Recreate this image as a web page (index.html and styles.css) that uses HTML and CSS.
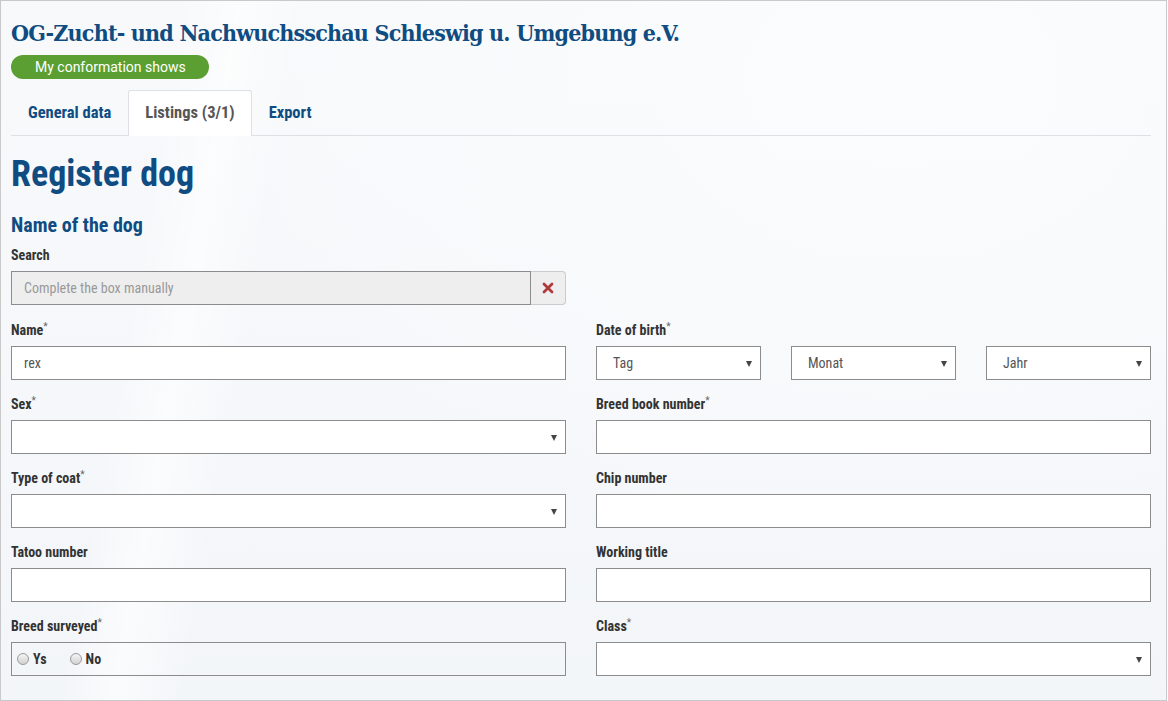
FILE: index.html
```html
<!DOCTYPE html>
<html lang="en">
<head>
    <meta charset="UTF-8">
    <meta name="viewport" content="width=device-width, initial-scale=1.0">
    <title>Register dog</title>
    <link rel="stylesheet" href="styles.css">
</head>
<body>
    <div class="page">
        <!-- Show header -->
        <div class="show-head">
            <h1 class="show-title">OG-Zucht- und Nachwuchsschau Schleswig u. Umgebung e.V.</h1>
            <span class="badge">My conformation shows</span>
        </div>

        <!-- Tabs -->
        <ul class="tabs">
            <li><a href="#">General data</a></li>
            <li class="active"><a href="#">Listings (3/1)</a></li>
            <li><a href="#">Export</a></li>
        </ul>

        <h2 class="page-title">Register dog</h2>
        <h3 class="section-title">Name of the dog</h3>

        <div class="form-grid">
            <!-- Search -->
            <div class="field field-search">
                <label>Search</label>
                <div class="input-group">
                    <input type="text" class="control control-readonly" placeholder="Complete the box manually">
                    <button class="clear-btn" type="button" title="Clear">
                        <svg width="12" height="12" viewBox="0 0 12 12">
                            <path d="M2 2 L10 10 M10 2 L2 10" stroke="#b0393b" stroke-width="2.8" stroke-linecap="round"/>
                        </svg>
                    </button>
                </div>
            </div>
            <div></div>

            <div class="field">
                <label>Name<sup>*</sup></label>
                <input type="text" class="control" value="rex">
            </div>
            <div class="field">
                <label>Date of birth<sup>*</sup></label>
                <div class="date-row">
                    <div class="select"><span>Tag</span></div>
                    <div class="select"><span>Monat</span></div>
                    <div class="select"><span>Jahr</span></div>
                </div>
            </div>

            <div class="field">
                <label>Sex<sup>*</sup></label>
                <div class="select"></div>
            </div>
            <div class="field">
                <label>Breed book number<sup>*</sup></label>
                <input type="text" class="control">
            </div>

            <div class="field">
                <label>Type of coat<sup>*</sup></label>
                <div class="select"></div>
            </div>
            <div class="field">
                <label>Chip number</label>
                <input type="text" class="control">
            </div>

            <div class="field">
                <label>Tatoo number</label>
                <input type="text" class="control">
            </div>
            <div class="field">
                <label>Working title</label>
                <input type="text" class="control">
            </div>

            <div class="field">
                <label>Breed surveyed<sup>*</sup></label>
                <div class="radio-box">
                    <label class="radio"><span class="dot"></span>Ys</label>
                    <label class="radio"><span class="dot"></span>No</label>
                </div>
            </div>
            <div class="field">
                <label>Class<sup>*</sup></label>
                <div class="select"></div>
            </div>
        </div>
    </div>
</body>
</html>
```

FILE: styles.css
```css
/* Main styling */
body {
    margin: 0;
    font-family: Roboto, "Liberation Sans", sans-serif;
    background: #fff;
}

.page {
    box-sizing: border-box;
    width: 1167px;
    height: 701px;
    overflow: hidden;
    border: 1px solid #c9c9c9;
    padding: 0 0 0 10px;
    background-color: #f6f8fa;
    background-image:
        linear-gradient(100deg, rgba(255,255,255,0) 0px, rgba(255,255,255,0) 180px, rgba(255,255,255,0.6) 235px, rgba(255,255,255,0) 300px),
        radial-gradient(ellipse 700px 500px at 900px 80px, #fbfcfd 0%, rgba(251,252,253,0) 100%),
        linear-gradient(180deg, #f8f9fb 0%, #f3f6f9 100%);
}

.show-head {
    padding-top: 15px;
}

.show-title {
    margin: 0;
    font-family: "DejaVu Serif", "Liberation Serif", serif;
    font-size: 23px;
    font-weight: 700;
    font-stretch: condensed;
    line-height: 34px;
    color: #0f4c81;
    letter-spacing: -0.8px;
}

.badge {
    display: inline-block;
    margin-top: 5px;
    height: 24px;
    line-height: 24px;
    padding: 0 23px 0 24px;
    border-radius: 12px;
    background: #5b9f33;
    color: #fff;
    font-size: 14px;
}

/* Tabs */
.tabs {
    display: flex;
    list-style: none;
    margin: 11px 0 0 0;
    padding: 0;
    width: 1140px;
    border-bottom: 1px solid #dde1e5;
}

.tabs li {
    margin-bottom: -1px;
}

.tabs a {
    display: block;
    padding: 0 16px;
    height: 44px;
    line-height: 44px;
    font-size: 16.5px;
    font-weight: 700;
    font-stretch: condensed;
    color: #0f4c81;
    text-decoration: none;
    border: 1px solid transparent;
    border-bottom: none;
    border-radius: 3px 3px 0 0;
}

.tabs li.active a {
    background: #fff;
    color: #555;
    border-color: #dde1e5;
    height: 45px;
}

.page-title {
    margin: 18px 0 0 0;
    font-size: 36px;
    line-height: 40px;
    font-weight: 700;
    font-stretch: condensed;
    color: #0f4c81;
}

.section-title {
    margin: 19px 0 0 0;
    font-size: 20px;
    line-height: 24px;
    font-weight: 700;
    font-stretch: condensed;
    color: #0f4c81;
}

/* Form */
.form-grid {
    display: grid;
    grid-template-columns: 555px 555px;
    column-gap: 30px;
    row-gap: 14px;
    margin-top: 8px;
}

.field > label {
    display: block;
    height: 20px;
    line-height: 20px;
    margin-bottom: 6px;
    font-size: 14px;
    font-weight: 700;
    font-stretch: condensed;
    color: #333;
}

.field > label sup {
    font-size: 10px;
    font-weight: 400;
    line-height: 0;
    vertical-align: 5px;
    color: #666;
}

.field-search {
    margin-bottom: 1px;
}

.control,
.select {
    box-sizing: border-box;
    display: block;
    width: 100%;
    height: 34px;
    margin: 0;
    padding: 0 12px;
    border: 1px solid #8c8c8c;
    background: #fff;
    font-family: Roboto, "Liberation Sans", sans-serif;
    font-size: 14px;
    font-stretch: condensed;
    color: #555;
    outline: none;
}

.control::placeholder {
    color: #999;
}

.input-group {
    display: flex;
}

.control-readonly {
    background: #eee;
    flex: 1;
}

.clear-btn {
    width: 35px;
    height: 34px;
    border: 1px solid #ccc;
    border-left: none;
    border-radius: 0 4px 4px 0;
    background: #eee;
    display: flex;
    align-items: center;
    justify-content: center;
    padding: 0;
}

.select {
    position: relative;
    line-height: 32px;
    padding-left: 16px;
}

.select::after {
    content: "";
    position: absolute;
    right: 8px;
    top: 14px;
    border-left: 3.5px solid transparent;
    border-right: 3.5px solid transparent;
    border-top: 6px solid #444;
}

.date-row {
    display: grid;
    grid-template-columns: 165px 165px 165px;
    column-gap: 30px;
}

.radio-box {
    box-sizing: border-box;
    height: 34px;
    border: 1px solid #8c8c8c;
    display: flex;
    align-items: center;
    padding-left: 5px;
    gap: 23px;
}

.radio {
    display: flex;
    align-items: center;
    font-size: 14px;
    font-weight: 700;
    font-stretch: condensed;
    color: #333;
}

.radio .dot {
    width: 10px;
    height: 10px;
    border-radius: 50%;
    border: 1px solid #9a9a9a;
    background: linear-gradient(180deg, #f4f4f4, #d2d2d2);
    margin-right: 4px;
}
```
